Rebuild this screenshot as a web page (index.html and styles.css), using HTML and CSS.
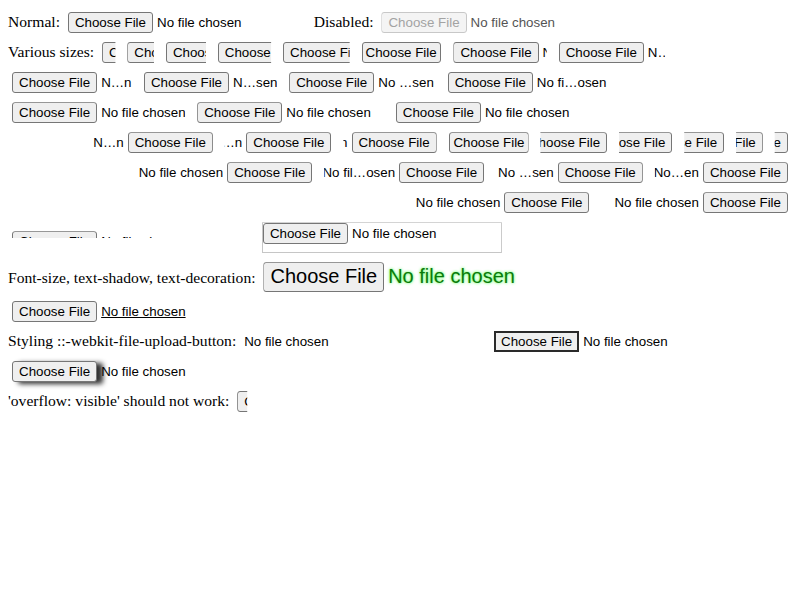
FILE: index.html
```html
<!DOCTYPE html>
<html>
<head>
<meta charset="utf-8">
<link rel="stylesheet" href="styles.css">
</head>
<body>
<div class="row">Normal: <span class="file"><span class="fbtn">Choose File</span><span class="fname">No file chosen</span></span> Disabled: <span class="file disabled"><span class="fbtn">Choose File</span><span class="fname">No file chosen</span></span></div>
<div class="row">Various sizes: <span class="file w1"><span class="fbtn">Choose File</span></span> <span class="file w2"><span class="fbtn">Choose File</span></span> <span class="file w3"><span class="fbtn">Choose File</span></span> <span class="file w4"><span class="fbtn">Choose File</span></span> <span class="file w5"><span class="fbtn">Choose File</span></span> <span class="file w6"><span class="fbtn tight">Choose File</span></span> <span class="file w7"><span class="fbtn">Choose File</span><span class="fname">N…n</span></span> <span class="file w8"><span class="fbtn">Choose File</span><span class="fname">N…n</span></span> <span class="file w9"><span class="fbtn">Choose File</span><span class="fname">N…n</span></span> <span class="file w10"><span class="fbtn">Choose File</span><span class="fname">N…sen</span></span> <span class="file w11"><span class="fbtn">Choose File</span><span class="fname">No …sen</span></span> <span class="file w12"><span class="fbtn">Choose File</span><span class="fname">No fi…osen</span></span> <span class="file w13"><span class="fbtn">Choose File</span><span class="fname">No file chosen</span></span> <span class="file w14"><span class="fbtn">Choose File</span><span class="fname">No file chosen</span></span> <span class="file w15"><span class="fbtn">Choose File</span><span class="fname">No file chosen</span></span></div>
<div class="row" dir="rtl"><span class="file w1"><span class="fbtn">Choose File</span></span> <span class="file w2"><span class="fbtn">Choose File</span></span> <span class="file w3"><span class="fbtn">Choose File</span></span> <span class="file w4"><span class="fbtn">Choose File</span></span> <span class="file w5"><span class="fbtn">Choose File</span></span> <span class="file w6"><span class="fbtn tight">Choose File</span></span> <span class="file w7"><span class="fbtn">Choose File</span><span class="fname">N…n</span></span> <span class="file w8"><span class="fbtn">Choose File</span><span class="fname">N…n</span></span> <span class="file w9"><span class="fbtn">Choose File</span><span class="fname">N…n</span></span> <span class="file w10"><span class="fbtn">Choose File</span><span class="fname">No…en</span></span> <span class="file w11"><span class="fbtn">Choose File</span><span class="fname">No …sen</span></span> <span class="file w12"><span class="fbtn">Choose File</span><span class="fname">No fil…osen</span></span> <span class="file w13"><span class="fbtn">Choose File</span><span class="fname">No file chosen</span></span> <span class="file w14"><span class="fbtn">Choose File</span><span class="fname">No file chosen</span></span> <span class="file w15"><span class="fbtn">Choose File</span><span class="fname">No file chosen</span></span></div>
<div class="row"><span class="file short"><span class="fbtn">Choose File</span><span class="fname">No file chosen</span></span> <span class="file boxed"><span class="fbtn">Choose File</span><span class="fname">No file chosen</span></span></div>
<div class="row">Font-size, text-shadow, text-decoration: <span class="file big"><span class="fbtn">Choose File</span><span class="fname">No file chosen</span></span></div>
<div class="row"><span class="file under"><span class="fbtn">Choose File</span><span class="fname">No file chosen</span></span></div>
<div class="row">Styling ::-webkit-file-upload-button: <span class="file nobtn"><span class="fbtn">Choose File</span><span class="fname">No file chosen</span></span> <span class="file styled"><span class="fbtn">Choose File</span><span class="fname">No file chosen</span></span></div>
<div class="row"><span class="file shadowed"><span class="fbtn">Choose File</span><span class="fname">No file chosen</span></span></div>
<div class="row">'overflow: visible' should not work: <span class="file tiny"><span class="fbtn">Choose File</span><span class="fname">No file chosen</span></span></div>
</body>
</html>
```
FILE: styles.css
```css
html { background: #fff; }
body {
  margin: 8px;
  font: 15.6px "Liberation Serif", "Times New Roman", serif;
  color: #000;
}
.file {
  display: inline-block;
  width: 238px;
  margin: 4px 4px 5px;
  font: 13.333px "Liberation Sans", Arial, sans-serif;
  white-space: nowrap;
  vertical-align: baseline;
  clip-path: inset(0);
}
.fbtn {
  display: inline-block;
  padding: 1px 6px;
  line-height: 1.28;
  border: 1px solid #767676;
  border-radius: 3px;
  background: #efefef;
  color: #000;
  margin-inline-end: 4px;
}
.fbtn.tight { padding: 1px 3px; }
.disabled .fbtn {
  color: #a3a3a3;
  border-color: #c8c8c8;
  background: #f4f4f4;
}
.disabled .fname { color: #545454; }
.w1 { width: 1em; } .w2 { width: 2em; } .w3 { width: 3em; }
.w4 { width: 4em; } .w5 { width: 5em; } .w6 { width: 6em; }
.w7 { width: 7em; } .w8 { width: 8em; } .w9 { width: 9em; }
.w10 { width: 10em; } .w11 { width: 11em; } .w12 { width: 12em; }
.w13 { width: 13em; } .w14 { width: 14em; } .w15 { width: 15em; }
.short {
  height: 7px;
  overflow: hidden;
  margin-bottom: 0;
}
.boxed {
  height: 29px;
  border: 1px solid #c6c6c6;
}
.big {
  font-size: 20px;
  width: 357px;
}
.big .fname {
  color: #0a7a0a;
  text-shadow: 0 0 3px #3f3;
}
.under .fname { text-decoration: underline; }
.nobtn .fbtn { display: none; }
.styled .fbtn {
  border: 2px solid #2a2a2a;
  border-radius: 0;
  padding: 0 5px;
}
.shadowed { clip-path: none; }
.shadowed .fbtn { box-shadow: 6px 2px 5px #333; }
.tiny { width: 10px; }
```
